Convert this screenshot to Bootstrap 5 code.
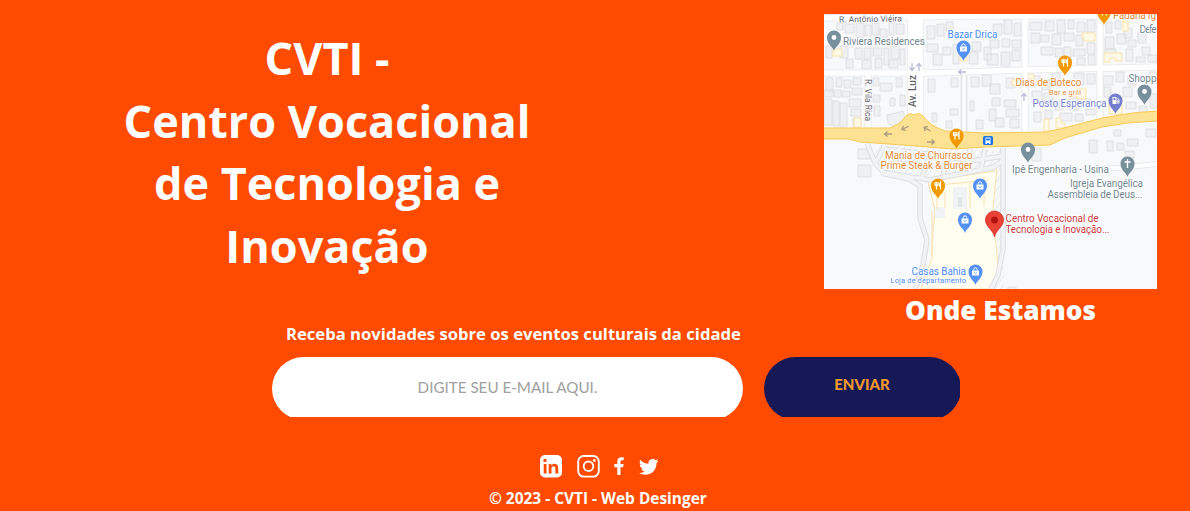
<!DOCTYPE html>
<html lang="pt-BR">
<head>
<meta charset="utf-8">
<meta name="viewport" content="width=device-width, initial-scale=1">
<title>CVTI</title>
<link href="https://cdn.jsdelivr.net/npm/bootstrap@5.3.0/dist/css/bootstrap.min.css" rel="stylesheet">
<style>
body{background:#ff4b00;color:#fff;font-family:"Open Sans",sans-serif;overflow:hidden}
.site-foot{height:511px}
.upper{height:326px;padding:14px 33px 0 117px}
.brand-title{width:420px;padding-top:13px;font-size:45px;line-height:62.6px;font-weight:700}
.place{width:333px}
.place svg{width:333px;height:275px}
.place figcaption{font-size:26.2px;line-height:35px;font-weight:800;margin-top:4px;padding-left:20px}
.news-label{width:455px;margin-left:286px;font-size:16.65px;line-height:22px;height:31px;margin-top:-3px;font-weight:700;white-space:nowrap}
.news-form{margin-left:272px;margin-top:3px;height:60px;gap:21px}
.clip{height:60px;overflow:hidden}
.clip-mail{width:471px}.clip-send{width:196px}
.clip .form-control{width:471px;height:63px;border:0;padding:0 0 4px;background:#fff;font:400 15.2px Lato,sans-serif}
.clip .form-control::placeholder{color:#a0a0a0;opacity:1}
.clip .btn{width:197px;height:63px;border:0;padding:0 1px 10px 0;background:#171856;color:#f39a2d;font:900 15px Lato,sans-serif}
.social{margin:38px 0 0 539px;height:24px}
.copy{margin:8px 0 0 489px;font-size:15.45px;line-height:22px;font-weight:700;white-space:nowrap}
.map-text{font-family:Roboto,sans-serif;font-size:10px;paint-order:stroke;stroke:#fff;stroke-width:1.6px;stroke-linejoin:round}
.map-text .tiny{font-size:7.5px}
.map-text .street{font-size:8.5px}
</style>
<script src="https://cdn.jsdelivr.net/npm/bootstrap@5.3.0/dist/js/bootstrap.bundle.min.js"></script>
</head>
<body>
<footer class="site-foot d-flex flex-column">
  <div class="upper d-flex justify-content-between align-items-start">
    <h1 class="brand-title text-center mb-0">CVTI -<br>Centro Vocacional<br>de Tecnologia e<br>Inovação</h1>
    <figure class="place text-center mb-0">
      <svg class="d-block" viewBox="824 14 333 275" role="img" aria-label="Mapa">
        <defs>
          <path id="pin" d="M0 11C-.8 7-7 4.500-7-2.500a7 7 0 0 1 14 0C7 4.500.8 7 0 11z"/>
          <g id="shop"><use href="#pin" fill="#5491f5"/><path d="M-3.500-3.500h7v5h-7z" fill="#fff"/><path d="M-1.700-3.500v-1a1.700 1.700 0 0 1 3.400 0v1" fill="none" stroke="#fff"/><path d="M-1.500-1.500q1.500 2 3 0" fill="none" stroke="#5491f5" stroke-width=".8"/></g>
          <g id="food"><use href="#pin" fill="#f29900"/><path d="M-3-6v3q1.500 1.500 3 0v-3M-1.500-6v7.500M2.500 1.500V-6q-1.500 2-1 4h1" fill="none" stroke="#fff" stroke-width="1.200"/></g>
          <g id="spot"><use href="#pin" fill="#78909c"/><circle cy="-2.500" r="2.400" fill="#fff"/></g>
          <path id="arr" d="M4 0H-3M-.5-2.500L-3.500 0l3 2.500" fill="none" stroke-width="1.300"/>
          <pattern id="hatch" width="5" height="5" patternUnits="userSpaceOnUse" patternTransform="rotate(35)"><path d="M0 0v5" stroke="#dfe1e5" stroke-width="1.200"/></pattern>
        </defs>
        <path fill="#f8f9fb" d="M824 14h333v275H824z"/>
        <!-- buildings -->
        <path fill="#eff0f2" stroke="#d9dbde" stroke-width=".8" d="M837 23h6v7h-6zM845 24h9v9h-9zM856 23h8v14h-8zM865 25h6v11h-6zM872 23h7v12h-7zM880 29h7v8h-7zM889 23h5v12h-5zM896 24h8v10h-8zM826 46h6v12h-6zM840 46h8v12h-8zM846 59h7v9h-7zM855 48h7v11h-7zM864 48h7v11h-7zM862 60h9v9h-9zM873 48h9v8h-9zM875 58h7v10h-7zM884 48h5v17h-5zM891 46h8v13h-8zM889 60h9v8h-9zM900 49h5v16h-5z
        M826 78h7v13h-7zM836 78h6v9h-6zM844 80h7v8h-7zM853 78h8v7h-8zM824 90h9v7h-9zM834 90h7v7h-7zM842 91h8v6h-8zM852 88h10v7h-10zM824 99h8v26h-8zM833 101h6v25h-6zM840 103h7v24h-7zM849 99h12v8h-12zM851 109h10v7h-10zM853 118h8v9h-8z
        M873 78h6v8h-6zM880 83h12v8h-12zM896 78h6v9h-6zM873 95h7v7h-7zM874 106h6v10h-6zM890 98h5v8h-5zM900 95h5v11h-5zM887 115l16-4 2 7-9 10-8-5z
        M927 26h8v13h-8zM937 24h7v12h-7zM946 22h7v9h-7zM927 44h11v8h-11zM933 54h9v11h-9zM943 47h8v8h-8zM953 44h6v20h-6zM969 52h9v12h-9zM972 42h9v9h-9zM984 47h7v13h-7zM993 24h9v11h-9zM1004 20h8v14h-8zM1014 23h7v13h-7zM1002 39h8v8h-8zM990 40h9v8h-9zM1012 40h9v8h-9zM987 54h11v11h-11zM1001 52h9v14h-9zM1012 50h8v11h-8z
        M928 79h7v13h-7zM951 78h7v9h-7zM950 109h8v6h-8zM932 113h5v9h-5zM971 77h8v10h-8zM982 75h9v11h-9zM970 101h4v10h-4zM946 121h6v7h-6zM976 120h7v9h-7z
        M1030 22h12v8h-12zM1045 21h9v10h-9zM1057 20h8v13h-8zM1068 20h6v9h-6zM1077 22h8v10h-8zM1087 20h8v12h-8zM1031 33h9v10h-9zM1041 35h8v7h-8zM1052 34h9v11h-9zM1064 33h10v8h-10zM1076 35h7v11h-7zM1041 47h12v8h-12zM1055 48h8v9h-8zM1064 47h7v15h-7zM1073 49h12v7h-12zM1077 58h8v7h-8zM1087 43h8v11h-8zM1088 55h7v10h-7z
        M1106 22h6v11h-6zM1115 21h6v8h-6zM1124 28h8v10h-8zM1105 37h9v12h-9zM1117 34h9v10h-9zM1128 40h8v7h-8zM1138 32h8v11h-8zM1142 47h8v8h-8zM1105 49h11v5h-11zM1126 49h7v12h-7zM1136 57h9v5h-9zM1148 55h9v7h-9z
        M990 84h10v10h-10zM1006 78h9v10h-9zM992 98h8v8h-8zM1004 100h12v7h-12zM989 109h7v12h-7zM1006 109h13v8h-13zM995 118h9v9h-9zM1010 119h9v9h-9zM1031 76h9v9h-9zM1042 80h8v10h-8zM1052 73h8v11h-8zM1074 73h10v12h-10zM1087 74h8v10h-8zM1032 91h10v12h-10zM1044 93h9v8h-9zM1055 101h8v9h-8zM1069 98h9v12h-9zM1082 99h9v7h-9zM1034 112h7v10h-7zM1045 110h7v9h-7zM1060 113h12v8h-12zM1075 114h8v7h-8zM1086 109h9v6h-9z
        M1103 76h10v9h-10zM1116 72h8v10h-8zM1128 76h8v9h-8zM1104 87h7v10h-7zM1123 87h9v10h-9zM1149 72h8v11h-8zM1126 102h10v7h-10zM1139 106h8v6h-8zM1150 94h7v14h-7zM1146 129h10v8h-10zM1089 140h8v13h-8zM1114 130h7v6h-7zM1107 141h6v10h-6zM1117 143h7v7h-7zM1127 139h11v7h-11zM1125 151h9v7h-9zM1032 148h9v13h-9zM1008 287h8v5h-8zM858 149h12v10h-12zM858 165h13v12h-13z"/>
        <path fill="#fff9e6" stroke="#f8e3ac" stroke-width="1" d="M833 49h9v7h-9zM854 118h7v9h-7zM1084 33h11v8h-11v-3h-2v-5zM1104 53h18v8h-7v-3h-5v4h-6zM1123 21h5v10h-5zM1026 74h8v5h-8zM1012 80h8v5h-8zM1077 89h9v10h-9v-3h-5v-4h5zM1044 119h5v12h-5zM1056 118h5v5h4v5h-9zM1109 98h13v16h-13zM960 57h7v4h-7z"/>
        <!-- streets -->
        <g fill="none" stroke="#e5e7ea" stroke-width="7"><path d="M824 73H930L1025 70L1157 67M824 18L985 16L1157 16M868 75V129M1025 14V134M1100 14V120M964 75V149" /><path d="M915.500 14V119" stroke-width="17"/></g>
        <g fill="none" stroke="#fff" stroke-width="5.500"><path d="M824 73H930L1025 70L1157 67M824 18L985 16L1157 16M868 75V129M1025 14V134M1100 14V120"/><path d="M964 75V149" stroke-width="3"/><path d="M915.500 14V119" stroke-width="15.500"/></g>
        <path fill="none" stroke="#e6e8eb" stroke-width="6" d="M1096 169L1120 168L1157 164"/><path fill="none" stroke="#fff" stroke-width="4" d="M1096 169L1120 168L1157 164"/>
        <!-- shopping area -->
        <path fill="url(#hatch)" d="M879 143L992 150L1004 148V289H994V175L930 181L917 180L884 176L873 160z"/>
        <path fill="#fffcf0" stroke="#f9e2b1" d="M928 181L962 176L995 171L997 168L993 208L995 235L998 265L994 289H921L932 258L933 231L935 211z"/>
        <path fill="#f1f3f4" d="M935 207h10v11h-10zM953 187h14v22h-14z"/><path fill="#e3e5e8" d="M958 197h4v10h-4z"/>
        <path fill="none" stroke="#f9e2b1" d="M937 209V184M945 208V192M970 208V181M984 176V205M928 186L989 180M932 211V256"/>
        <path id="lanes" fill="none" stroke="#dcdee2" stroke-width="5.500" d="M867 143L875 163L885 174L909 179L920 186L920 218L927 240L923 265L915 289M884 147L876 162M881 172L930 180L994 167L1003 160V249L998 275L991 289M900 148L895 163L918 166M885 149L936 155L972 161L1003 156M930 154L922 178M948 157L943 175M970 149L969 170M985 149L981 169M1003 148V164"/>
        <path fill="none" stroke="#f2f3f5" stroke-width="3.500" d="M867 143L875 163L885 174L909 179L920 186L920 218L927 240L923 265L915 289M884 147L876 162M881 172L930 180L994 167L1003 160V249L998 275L991 289M900 148L895 163L918 166M885 149L936 155L972 161L1003 156M930 154L922 178M948 157L943 175M970 149L969 170M985 149L981 169M1003 148V164"/>
        <!-- avenue -->
        <path fill="#fde293" stroke="#f8c95a" d="M823 128H890L900 123L907 115Q911 112 914 115Q918 112 922 115Q930 126 945 131L985 133L1045 132L1060 129L1102 118L1132 113L1158 111V121L1128 123L1102 127L1065 138L1050 145L985 147L953 149L903 145L860 142L848 139H823z"/>
        <g stroke="#a99d7e"><use href="#arr" x="888" y="134"/><use href="#arr" transform="translate(905 128) rotate(-25)"/><use href="#arr" transform="translate(927 129) rotate(30)"/><use href="#arr" transform="translate(931 142) rotate(180)"/></g>
        <g stroke="#b9bdd5"><use href="#arr" x="962" y="72"/><use href="#arr" transform="translate(912 67) rotate(-90)"/><use href="#arr" transform="translate(919 67) rotate(90)"/><use href="#arr" transform="translate(1024 97) rotate(90)"/></g>
        <rect x="983" y="136" width="10" height="9" rx="1.500" fill="#1a73e8"/><path fill="#fff" d="M985.500 137.500h5v5.500h-5zM985.500 143h1.500v1h-1.500zM989 143h1.500v1H989z"/><path fill="#1a73e8" d="M986.300 138.500h3.400v2h-3.400z"/>
        <!-- places -->
        <use href="#spot" x="834" y="40"/><use href="#shop" x="963.500" y="50"/><use href="#food" x="1065" y="65"/><use href="#food" x="1104" y="14"/><use href="#spot" x="1144.500" y="94"/><use href="#food" x="956.500" y="138"/>
        <g transform="translate(1115.500 103)"><use href="#pin" fill="#7480cf"/><path fill="#fff" d="M-3-6h4v7h-4z"/><path fill="#7480cf" d="M-2-5h2v2h-2z"/><path d="M1-2h1.500v3M2-5l1.500 2v3" fill="none" stroke="#fff"/></g>
        <use href="#spot" x="1028" y="152"/><g transform="translate(1127.500 166)"><use href="#pin" fill="#78909c"/><path d="M0-7V2M-3-4H3" stroke="#fff" stroke-width="1.400"/></g>
        <use href="#food" x="938" y="188"/><use href="#shop" x="980" y="188"/><use href="#shop" x="965" y="222"/><use href="#shop" x="975.500" y="274"/>
        <path fill="#ea4335" stroke="#c5221f" stroke-width=".7" d="M994.500 237C993.500 230 985.500 227 985.500 220a9 9 0 0 1 18 0C1003.500 227 995.500 230 994.500 237z"/><circle cx="994.500" cy="220" r="3.500" fill="#b31412"/>
        <g class="map-text">
          <g fill="#5f6368"><text class="street" x="839" y="22.500" textLength="63" transform="rotate(-1 839 23)">R. Antônio Viéira</text><text class="street" transform="translate(865 79) rotate(90)" textLength="42">R. Vila Rica</text><text transform="translate(916 107) rotate(-90)" font-weight="500" textLength="32">Av. Luz</text></g>
          <g fill="#70858f"><text x="843" y="45" textLength="82">Riviera Residences</text><text x="1139.500" y="33" textLength="17">Defe</text><text x="1128.500" y="82" textLength="28">Shopp</text><text x="1012" y="173" textLength="97">Ipê Engenharia - Usina</text><text x="1070" y="187" textLength="73">Igreja Evangélica</text><text x="1047.500" y="198" textLength="95">Assembleia de Deus...</text></g>
          <g fill="#4a8af4"><text x="947.500" y="37.500" textLength="50">Bazar Drica</text><text x="911.500" y="274.500" textLength="54.500">Casas Bahia</text><text class="tiny" x="890.500" y="283" textLength="75.500">Loja de departamento</text></g>
          <g fill="#e28a35"><text x="1113" y="18.500" textLength="43">Padaria Ig</text><text x="1015.500" y="86" textLength="66">Dias de Boteco</text><text class="tiny" x="1049" y="94.500" textLength="32">Bar e grill</text><text x="885" y="158.500" textLength="87.500">Mania de Churrasco</text><text x="880.500" y="169" textLength="92">Prime Steak &amp; Burger</text></g>
          <text x="1032.500" y="107" fill="#7480cf" textLength="74">Posto Esperança</text>
          <g fill="#c9373b"><text x="1005.500" y="221.500" textLength="93">Centro Vocacional de</text><text x="1005.500" y="233" textLength="104">Tecnologia e Inovação...</text></g>
        </g>
      </svg>
      <figcaption>Onde Estamos</figcaption>
    </figure>
  </div>
  <label class="news-label" for="mail">Receba novidades sobre os eventos culturais da cidade</label>
  <form class="news-form d-flex">
    <div class="clip clip-mail"><input id="mail" type="email" class="form-control rounded-pill text-center" placeholder="DIGITE SEU E-MAIL AQUI."></div>
    <div class="clip clip-send"><button type="button" class="btn rounded-pill">ENVIAR</button></div>
  </form>
  <div class="social d-flex align-items-start">
    <svg width="120" height="24" viewBox="0 0 120 24" fill="#fff">
      <rect x="1" y="0" width="22" height="22.500" rx="5"/><g fill="#ff4b00"><circle cx="6" cy="5.500" r="1.700"/><path d="M4.700 9h2.800v9.500H4.700zM9.700 9h2.600v1.400c1.700-2.500 6.900-2.200 6.900 2.300v5.800h-2.800v-5c0-3.200-3.900-3-3.900 0v5H9.700z"/></g>
      <rect x="39.200" y="1" width="20.600" height="20.600" rx="5.500" fill="none" stroke="#fff" stroke-width="1.900"/><circle cx="49.500" cy="11.300" r="4.800" fill="none" stroke="#fff" stroke-width="1.900"/><circle cx="55.300" cy="5.500" r="1.400"/>
      <path d="M78.300 20v-7.800h-3V8.900h3V6.500c0-3 1.700-4.300 4.200-4.300l2.200.1v2.900h-1.600c-1.300 0-1.600.6-1.600 1.600v2.100h3.100l-.5 3.300h-2.600V20z"/>
      <path transform="translate(100 1.500) scale(1.220)" d="M5.026 15c6.038 0 9.341-5.003 9.341-9.334q.002-.211-.006-.422A6.700 6.700 0 0 0 16 3.542a6.700 6.700 0 0 1-1.889.518 3.300 3.300 0 0 0 1.447-1.817 6.500 6.500 0 0 1-2.087.793A3.286 3.286 0 0 0 7.875 6.030a9.320 9.320 0 0 1-6.767-3.429 3.290 3.290 0 0 0 1.018 4.382A3.300 3.300 0 0 1 .64 6.575v.045a3.290 3.290 0 0 0 2.632 3.218 3.200 3.200 0 0 1-.865.115 3 3 0 0 1-.614-.057 3.280 3.280 0 0 0 3.067 2.277A6.600 6.600 0 0 1 .78 13.580a6 6 0 0 1-.780-.045A9.340 9.340 0 0 0 5.026 15"/>
    </svg>
  </div>
  <p class="copy mb-0">© 2023 - CVTI - Web Desinger</p>
</footer>
</body>
</html>
